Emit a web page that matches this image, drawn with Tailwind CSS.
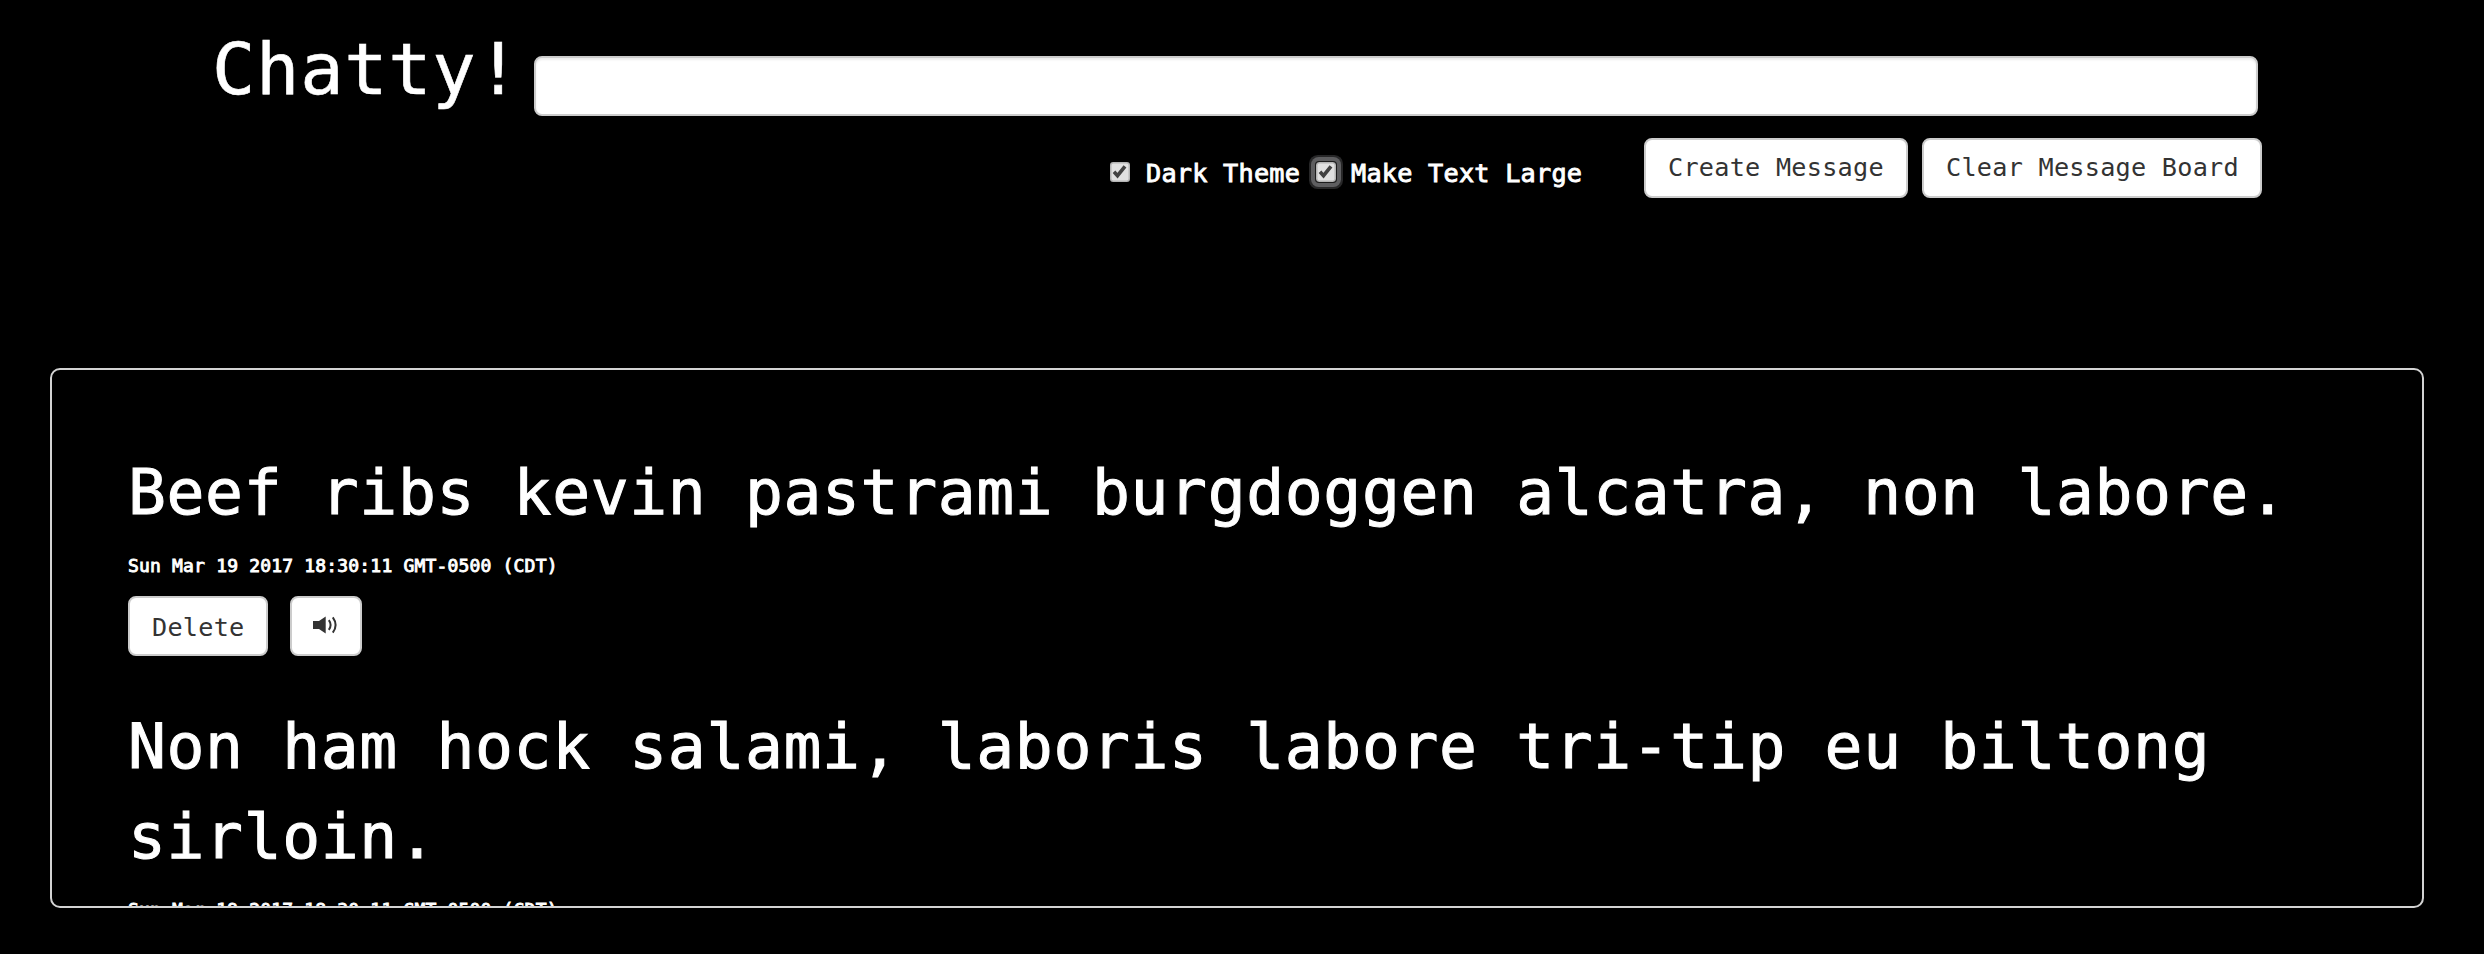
<!DOCTYPE html>
<html lang="en">
<head>
<meta charset="utf-8">
<title>Chatty!</title>
<script src="https://cdn.jsdelivr.net/npm/@tailwindcss/browser@4"></script>
</head>
<body class="h-[954px] overflow-hidden bg-black font-['DejaVu_Sans_Mono',monospace] text-white">
<header class="flex h-[368px] flex-col pr-[222px] pl-[212px]">
  <div class="flex pt-[29px] pr-1">
    <h1 class="w-[322px] shrink-0 text-[72px] leading-[80px] tracking-[0.01em] [-webkit-text-stroke:0.6px_white]">Chatty!</h1>
    <input type="text" aria-label="Message" class="mt-[27px] h-[60px] flex-1 rounded-lg border-2 border-[#ccc] bg-white shadow-[inset_0_2px_2px_rgba(0,0,0,0.075)] outline-none">
  </div>
  <div class="mt-[22px] flex justify-end">
    <div class="mt-[18px] mr-[60px] flex text-[25.2px] leading-[36px] tracking-[0.01em] whitespace-nowrap [-webkit-text-stroke:0.9px_white]">
      <label class="flex w-[206px]">
        <svg class="mt-[6px] mr-[16px] size-5 shrink-0" viewBox="0 0 20 20"><rect x=".75" y=".75" width="18.5" height="18.5" rx="2.5" fill="#e0e0e0" stroke="#b4b4b4" stroke-width="1.5"/><path d="M4 9.8 7.5 13.7 15 4.3" fill="none" stroke="#414141" stroke-width="3.6"/></svg>
        <span>Dark Theme</span>
      </label>
      <label class="flex w-[268px]">
        <svg class="mt-[6px] mr-[15px] size-5 shrink-0 rounded-[3px] shadow-[0_0_0_1px_#1c1c1c,0_0_0_5px_#5e5e60,0_0_0_7px_#272728]" viewBox="0 0 20 20"><rect x=".75" y=".75" width="18.5" height="18.5" rx="2.5" fill="#e0e0e0" stroke="#b4b4b4" stroke-width="1.5"/><path d="M4 9.8 7.5 13.7 15 4.3" fill="none" stroke="#414141" stroke-width="3.6"/></svg>
        <span>Make Text Large</span>
      </label>
    </div>
    <button class="mr-[14px] h-[60px] w-[264px] rounded-lg border-2 border-[#ccc] bg-white pb-px pl-[22px] text-left text-[25.2px] leading-[36px] tracking-[0.01em] whitespace-nowrap text-[#333]">Create Message</button>
    <button class="h-[60px] w-[340px] rounded-lg border-2 border-[#ccc] bg-white pb-px pl-[22px] text-left text-[25.2px] leading-[36px] tracking-[0.01em] whitespace-nowrap text-[#333]">Clear Message Board</button>
  </div>
</header>
<main class="mr-[60px] ml-[50px] h-[540px] overflow-hidden rounded-[10px] border-2 border-[#d3d3d3] px-[76px] pt-[78px]">
  <article class="mb-[46px]">
    <p class="text-[63px] leading-[90px] tracking-[0.01em] [-webkit-text-stroke:1px_white]">Beef ribs kevin pastrami burgdoggen alcatra, non labore.</p>
    <p class="mt-[15px] text-[18px] leading-[26px] tracking-[0.01em] [-webkit-text-stroke:0.9px_white]">Sun Mar 19 2017 18:30:11 GMT-0500 (CDT)</p>
    <div class="mt-[17px] flex gap-[22px]">
      <button class="h-[60px] w-[140px] rounded-lg border-2 border-[#ccc] bg-white pt-[3px] pl-[22px] text-left text-[25.2px] leading-[36px] tracking-[0.01em] text-[#333]">Delete</button>
      <button aria-label="Read aloud" class="flex h-[60px] w-[72px] items-center justify-center rounded-lg border-2 border-[#ccc] bg-white text-[#333]">
        <svg class="-mt-[2px] mr-[2px] h-[18px] w-[24px]" viewBox="0 0 24 18"><path d="M0 5h6l6.7-4.5v17L6 13H0z" fill="currentColor"/><path d="M15.8 4.2q3.6 4.8 0 9.6M19.8 1.3q5.6 7.7 0 15.4" fill="none" stroke="currentColor" stroke-width="2"/></svg>
      </button>
    </div>
  </article>
  <article>
    <p class="text-[63px] leading-[90px] tracking-[0.01em] [-webkit-text-stroke:1px_white]">Non ham hock salami, laboris labore tri-tip eu biltong sirloin.</p>
    <p class="mt-[15px] text-[18px] leading-[26px] tracking-[0.01em] [-webkit-text-stroke:0.9px_white]">Sun Mar 19 2017 18:30:11 GMT-0500 (CDT)</p>
  </article>
</main>
</body>
</html>
